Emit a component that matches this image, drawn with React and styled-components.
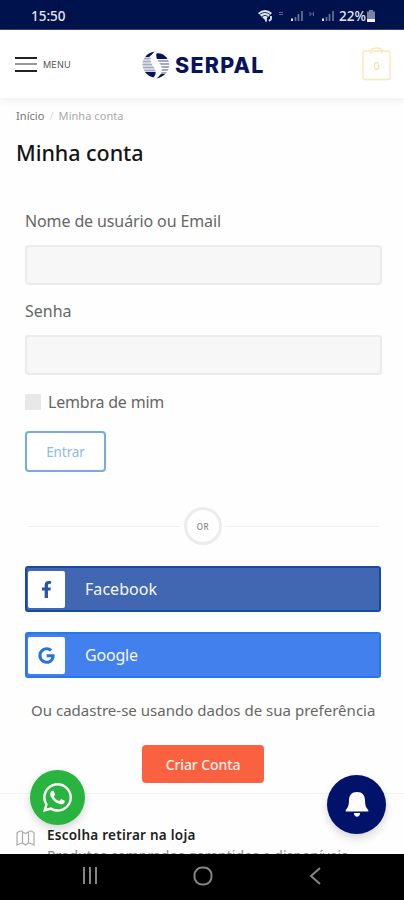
import styled, { createGlobalStyle } from "styled-components";
import { FaFacebookF, FaGoogle, FaWhatsapp } from "react-icons/fa";

const GlobalStyle = createGlobalStyle`
  * {
    box-sizing: border-box;
  }

  body {
    margin: 0;
    background: #fff;
    font-family: "Noto Sans", "Open Sans", sans-serif;
    color: #666;
  }

  button,
  input {
    font-family: inherit;
  }
`;

const Screen = styled.div`
  position: relative;
  display: flex;
  flex-direction: column;
  width: 404px;
  height: 900px;
  overflow: hidden;
  background: #fefefe;
`;

const StatusBar = styled.div`
  display: flex;
  flex-shrink: 0;
  align-items: center;
  justify-content: space-between;
  height: 30px;
  padding: 2px 28px 0 31px;
  background: #00124d;
  border-bottom: 1px solid #3c4570;
  color: #e4e7f0;
  font-family: "Noto Sans", sans-serif;
  font-size: 13.5px;
  font-weight: 500;
  letter-spacing: 0;
`;

const StatusIcons = styled.div`
  display: flex;
  align-items: center;
  font-size: 13.5px;
  letter-spacing: 0;
`;

const Header = styled.header`
  position: relative;
  display: flex;
  flex-shrink: 0;
  align-items: center;
  height: 68px;
  padding: 0 13px 0 15px;
  background: #fff;
  box-shadow: 0 2px 8px rgba(0, 0, 0, 0.07);

  > svg {
    margin-left: auto;
  }
`;

const MenuButton = styled.div`
  display: flex;
  align-items: center;
  gap: 6px;
  width: 127px;
  color: #555;
  font-family: Inter, sans-serif;
  font-size: 9px;
  letter-spacing: 0.2px;
`;

const MenuLines = styled.div`
  display: flex;
  flex-direction: column;
  justify-content: space-between;
  width: 22px;
  height: 15px;
  border-top: 2px solid #222;
  border-bottom: 2px solid #222;

  &::before {
    content: "";
    height: 2px;
    margin: auto 0;
    background: #999;
  }
`;

const Brand = styled.div`
  display: flex;
  align-items: center;
  gap: 5px;
  margin-top: 1px;
  color: #08135d;
  font-family: Inter, sans-serif;
  font-size: 21.5px;
  font-weight: 800;
  letter-spacing: 1.2px;
`;

const Content = styled.main`
  display: flex;
  flex: 1;
  flex-direction: column;
  min-height: 0;
  padding: 7px 16px 0;
`;

const Breadcrumb = styled.nav`
  display: flex;
  height: 20px;
  align-items: center;
  gap: 5px;
  color: #a9a9a9;
  font-size: 11px;
  letter-spacing: 0.05px;

  b {
    color: #777;
    font-weight: 400;
  }

  i {
    color: #ddd;
    font-style: normal;
  }
`;

const Title = styled.h1`
  height: 32px;
  margin: 12px 0 40px;
  color: #151515;
  font-size: 21.5px;
  font-weight: 500;
  line-height: 32px;
  letter-spacing: -0.05px;
`;

const Form = styled.form`
  display: flex;
  flex-direction: column;
  padding: 0 7px 0 9px;
`;

const Label = styled.label`
  height: 24px;
  margin-bottom: 12px;
  font-size: 16px;
  line-height: 24px;
  letter-spacing: ${({ $spacing }) => $spacing};
`;

const Input = styled.input`
  width: 357px;
  height: 40px;
  margin-bottom: 14px;
  padding: 0 12px;
  background: #f7f7f7;
  border: 2px solid #ebebeb;
  border-radius: 4px;
  outline: none;
`;

const Remember = styled.label`
  display: flex;
  align-items: center;
  gap: 7px;
  height: 24px;
  margin-top: 1px;
  font-size: 16px;
  letter-spacing: -0.2px;
`;

const Checkbox = styled.span`
  width: 16px;
  height: 16px;
  background: #e8e8e8;
  border-radius: 1px;
`;

const LoginButton = styled.button`
  width: 81px;
  height: 41px;
  margin-top: 17px;
  padding: 0;
  background: #fff;
  border: 2px solid #74abe2;
  border-radius: 4px;
  color: #8dbbe8;
  font-size: 13.5px;
  letter-spacing: -0.1px;
`;

const Divider = styled.div`
  display: flex;
  align-items: center;
  height: 38px;
  margin: 35px 2px 21px 2px;

  &::before,
  &::after {
    content: "";
    flex: 1;
    height: 1px;
    background: #f2f2f2;
  }

  span {
    display: flex;
    align-items: center;
    justify-content: center;
    width: 38px;
    height: 38px;
    margin: 0 3px;
    border: 3px solid #ececec;
    border-radius: 50%;
    color: #858585;
    font-size: 8px;
    font-weight: 500;
    letter-spacing: 0.6px;
  }
`;

const SocialButton = styled.button`
  display: flex;
  align-items: center;
  gap: 20px;
  width: 356px;
  height: 46px;
  margin-bottom: 20px;
  padding: 0 2px;
  background: ${({ $color }) => $color};
  border: 2px solid ${({ $border }) => $border};
  border-radius: 3px;
  color: #f5f8ff;
  font-size: 16px;
  letter-spacing: ${({ $spacing }) => $spacing};
`;

const SocialIcon = styled.span`
  display: flex;
  align-items: center;
  justify-content: center;
  width: 37px;
  height: 37px;
  margin-left: -1px;
  background: #fff;
  border-radius: 2px;
  color: ${({ $color }) => $color};
`;

const SignupText = styled.p`
  height: 24px;
  margin: 0 0 23px 6px;
  font-size: 15px;
  line-height: 24px;
  letter-spacing: 0.02px;
  white-space: nowrap;
`;

const SignupButton = styled.button`
  align-self: center;
  width: 122px;
  height: 38px;
  padding: 0;
  background: #f96140;
  border: 0;
  border-radius: 4px;
  color: #fff0e8;
  font-size: 14px;
  font-weight: 500;
  letter-spacing: -0.1px;
`;

const Perk = styled.section`
  display: flex;
  gap: 12px;
  flex: 1;
  min-height: 0;
  margin: 10px -16px 0;
  padding: 31px 16px 0;
  overflow: hidden;
  border-top: 1px solid #f4f4f4;

  svg {
    flex-shrink: 0;
    margin-top: 5px;
  }

  h2 {
    height: 20px;
    margin: 0;
    color: #222;
    font-size: 13.5px;
    font-weight: 600;
    line-height: 20px;
    letter-spacing: 0.26px;
  }

  p {
    margin: 1px 0 0;
    color: #888;
    font-size: 14px;
    line-height: 20px;
    white-space: nowrap;
  }
`;

const FloatingButton = styled.div`
  position: absolute;
  top: ${({ $top }) => $top};
  left: ${({ $left }) => $left};
  display: flex;
  align-items: center;
  justify-content: center;
  width: ${({ $size }) => $size};
  height: ${({ $size }) => $size};
  background: ${({ $color }) => $color};
  border-radius: 50%;
  box-shadow: 0 4px 9px rgba(0, 0, 0, 0.16);
  color: #fff;
`;

const NavBar = styled.footer`
  position: relative;
  display: flex;
  flex-shrink: 0;
  align-items: center;
  justify-content: space-between;
  height: 46px;
  padding: 0 79px 2px 81px;
  background: #000;
`;

const StatusGlyphs = () => (
  <svg width="82" height="18" viewBox="0 0 82 18">
    <path d="M1 6Q8 0 15 6L8 13Z" fill="#e0e4ed" />
    <path d="M2.500 7.500Q8 3.500 13 7.500M5 9.500Q8 7 11 9.500" fill="none" stroke="#26325f" />
    <path d="M9 14.500V10.500M12 14l2-1.800V9" fill="none" stroke="#e0e4ed" strokeWidth="1.800" />
    <path d="M22 5.500h4M22 7.500h4M53 5v4M56.500 5v4M53 7h3.500" stroke="#59638b" />
    <path d="M35 14v-2.500M66 14v-2.500" stroke="#e8ebf2" strokeWidth="2" />
    <path
      d="M38.500 14v-4M41.500 14V7M45 14V4M69.500 14v-4M72.500 14V7M76 14V4"
      stroke="#66709a"
      strokeWidth="1.700"
    />
  </svg>
);

const BatteryIcon = () => (
  <svg width="10" height="14" viewBox="0 0 10 14">
    <path d="M3 1h4v1.500h2V10H1V2.500h2z" fill="#7b84a5" />
    <path d="M1 10h8v3H1z" fill="#f2f3f8" />
  </svg>
);

const LogoIcon = () => (
  <svg width="28" height="28" viewBox="0 0 28 28">
    <defs>
      <clipPath id="logo-left">
        <path d="M12.500.5C5 2 .5 7 .5 13.500c0 6 4.500 11.500 11 13 2.500-2.500 3-6 .5-10C8.500 12 6 7.500 12.500.5Z" />
      </clipPath>
      <clipPath id="logo-right">
        <path d="M14.500 2.500C20 1 26 6 27 12c1 8-4.500 14-12.500 15.500C20.500 23 21 18 18.500 13.500 15.500 9.500 13.500 6.500 14.500 2.500Z" />
      </clipPath>
    </defs>
    <g clipPath="url(#logo-left)">
      <path d="M0 7.500h14M0 10.500h14M0 13.500h14M0 16.500h14M0 19.500h14" stroke="#a4a9c0" strokeWidth="2" />
      <path d="M0 21h15v7H0zM7 0h7L7 6H3z" fill="#08135d" />
    </g>
    <g clipPath="url(#logo-right)">
      <path d="M12 0h16v8H12zM14 28v-4l6-1h8v5z" fill="#08135d" />
      <path d="M14 10h14M14 13h14M14 16h14M14 19h14M14 22h14" stroke="#a4a9c0" strokeWidth="2" />
    </g>
  </svg>
);

const CartIcon = () => (
  <svg width="29" height="35" viewBox="0 0 29 35">
    <rect x="1" y="4" width="27" height="28.500" rx="2" fill="none" stroke="#fae8b8" strokeWidth="1.400" />
    <path d="M9 7V4.500q0-3.500 5.500-3.500T20 4.500V7" fill="none" stroke="#fae8b8" strokeWidth="1.300" />
    <text x="14.500" y="23" textAnchor="middle" fontFamily="Noto Sans" fontSize="10" fill="#f5d98f">
      0
    </text>
  </svg>
);

const BellIcon = () => (
  <svg width="24" height="27" viewBox="0 0 24 27">
    <path
      d="M12 1C6.500 1 4.200 4.500 4 9c-.1 5-.8 7.500-3.300 10v1.500h22.600V19C20.800 16.500 20.100 14 20 9c-.2-4.500-2.500-8-8-8Z"
      fill="#fff"
    />
    <path d="M9 22h6c0 5-6 5-6 0Z" fill="#fff" />
  </svg>
);

const MapIcon = () => (
  <svg width="19" height="16" viewBox="0 0 19 16" fill="none" stroke="#aaa" strokeWidth="1.200">
    <path d="M1 3q2-2 4-2 1 0 1.500 1v11q-2 0-5.500 2zM6.500 2l3 1.500 3-1.500v11l-3 2-3-2M12.500 2q1-1 2-1 2 0 3.500 2v12q-3-2-5.500-2" />
  </svg>
);

const App = () => {
  return (
    <Screen>
      <GlobalStyle />
      <StatusBar>
        <span>15:50</span>
        <StatusIcons>
          <StatusGlyphs />
          22%
          <BatteryIcon />
        </StatusIcons>
      </StatusBar>

      <Header>
        <MenuButton>
          <MenuLines />
          MENU
        </MenuButton>
        <Brand>
          <LogoIcon />
          SERPAL
        </Brand>
        <CartIcon />
      </Header>

      <Content>
        <Breadcrumb>
          <b>Início</b>
          <i>/</i>
          <span>Minha conta</span>
        </Breadcrumb>
        <Title>Minha conta</Title>

        <Form>
          <Label htmlFor="username" $spacing="-0.12px">
            Nome de usuário ou Email
          </Label>
          <Input id="username" type="text" />
          <Label htmlFor="password" $spacing="0px">
            Senha
          </Label>
          <Input id="password" type="password" />
          <Remember>
            <Checkbox />
            Lembra de mim
          </Remember>
          <LoginButton type="button">Entrar</LoginButton>

          <Divider>
            <span>OR</span>
          </Divider>

          <SocialButton type="button" $color="#4267b2" $border="#164ba3" $spacing="0.05px">
            <SocialIcon $color="#2855a6">
              <FaFacebookF size={17} />
            </SocialIcon>
            Facebook
          </SocialButton>
          <SocialButton type="button" $color="#4180ed" $border="#2877e5" $spacing="-0.2px">
            <SocialIcon $color="#2472df">
              <FaGoogle size={17} />
            </SocialIcon>
            Google
          </SocialButton>

          <SignupText>Ou cadastre-se usando dados de sua preferência</SignupText>
          <SignupButton type="button">Criar Conta</SignupButton>
        </Form>

        <Perk>
          <MapIcon />
          <div>
            <h2>Escolha retirar na loja</h2>
            <p>Produtos comprados garantidos e disponíveis</p>
          </div>
        </Perk>
      </Content>

      <FloatingButton $top="769.5px" $left="30px" $size="55px" $color="#28b43f">
        <FaWhatsapp size={33} />
      </FloatingButton>
      <FloatingButton $top="775px" $left="327px" $size="59px" $color="#00126a">
        <BellIcon />
      </FloatingButton>

      <NavBar>
        <svg width="18" height="20" viewBox="0 0 18 20" stroke="#858585" strokeWidth="2">
          <path d="M3 1v17M9 1v17M15 1v17" />
        </svg>
        <svg width="20" height="20" viewBox="0 0 20 20" fill="none" stroke="#858585" strokeWidth="2">
          <rect x="1.500" y="1.500" width="17" height="17" rx="7.500" />
        </svg>
        <svg width="18" height="20" viewBox="0 0 18 20" fill="none" stroke="#858585" strokeWidth="2">
          <path d="M13 2 4 10l9 8" />
        </svg>
      </NavBar>
    </Screen>
  );
};

export default App;
